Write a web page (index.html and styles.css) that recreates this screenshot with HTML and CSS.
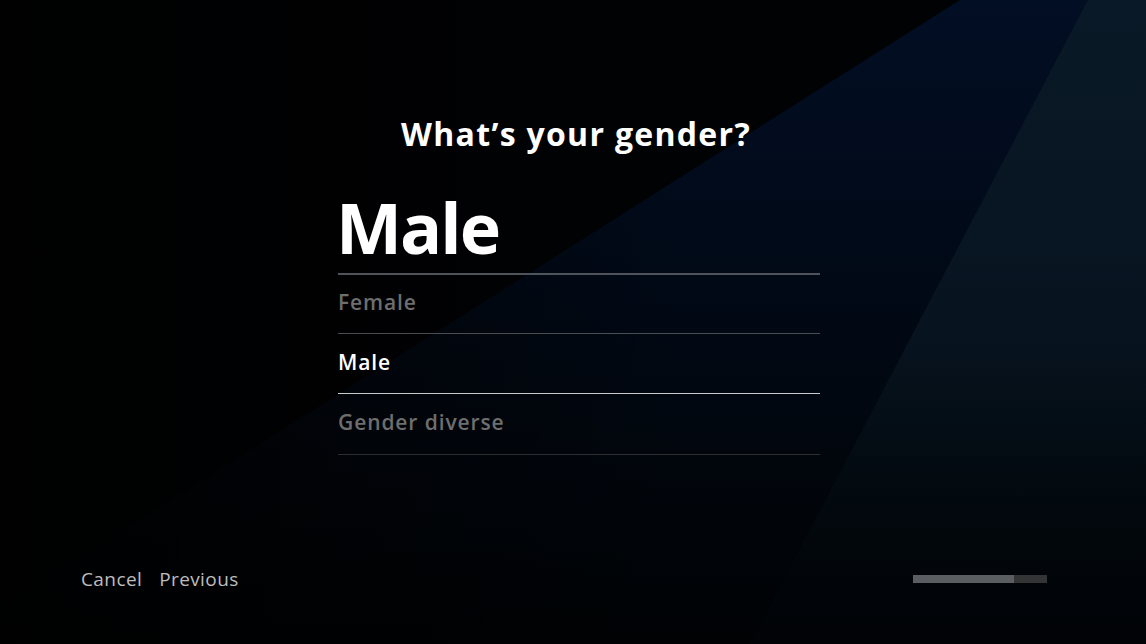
FILE: index.html
```html
<!DOCTYPE html>
<html lang="en">
<head>
<meta charset="utf-8">
<title>What's your gender?</title>
<link rel="stylesheet" href="styles.css">
</head>
<body>
<div class="screen">
  <svg class="backdrop" width="1146" height="644" viewBox="0 0 1146 644" aria-hidden="true">
    <defs>
      <linearGradient id="gBlue" x1="0" y1="0" x2="0" y2="1">
        <stop offset="0" stop-color="#020e24"/>
        <stop offset="0.45" stop-color="#010916"/>
        <stop offset="0.8" stop-color="#01050a"/>
        <stop offset="1" stop-color="#000204"/>
      </linearGradient>
      <linearGradient id="gTeal" x1="0" y1="0" x2="0" y2="1">
        <stop offset="0" stop-color="#0a1927"/>
        <stop offset="0.5" stop-color="#071420"/>
        <stop offset="0.8" stop-color="#02080d"/>
        <stop offset="1" stop-color="#010306"/>
      </linearGradient>
      <linearGradient id="gFade" x1="0" y1="0" x2="1" y2="0">
        <stop offset="0" stop-color="#000" stop-opacity="0.85"/>
        <stop offset="0.35" stop-color="#000" stop-opacity="0.35"/>
        <stop offset="0.6" stop-color="#000" stop-opacity="0"/>
      </linearGradient>
    </defs>
    <rect width="1146" height="644" fill="#010204"/>
    <polygon points="960,0 1146,0 1146,644 0,644 0,609" fill="url(#gBlue)"/>
    <rect width="1146" height="644" fill="url(#gFade)"/>
    <polygon points="1088,0 1146,0 1146,644 750,644" fill="url(#gTeal)"/>
  </svg>

  <main class="content">
    <h1 class="title">What’s your gender?</h1>
    <section class="picker">
      <div class="current">Male</div>
      <ul class="options">
        <li class="option">Female</li>
        <li class="option option--selected">Male</li>
        <li class="option option--last">Gender diverse</li>
      </ul>
    </section>
  </main>

  <footer class="footer">
    <nav class="nav">
      <span class="nav-link">Cancel</span>
      <span class="nav-link">Previous</span>
    </nav>
    <div class="progress"><div class="progress-fill" style="width: 75%"></div></div>
  </footer>
</div>
</body>
</html>
```

FILE: styles.css
```css
* { box-sizing: border-box; }

html, body {
  margin: 0;
  padding: 0;
  background: #000;
}

body {
  font-family: "Open Sans", "Noto Sans", sans-serif;
  color: #fff;
}

.screen {
  position: relative;
  width: 1146px;
  height: 644px;
  overflow: hidden;
  display: flex;
  flex-direction: column;
}

.backdrop {
  position: absolute;
  left: 0;
  top: 0;
  z-index: 0;
}

.content {
  position: relative;
  z-index: 1;
  display: flex;
  flex-direction: column;
  align-items: center;
  padding-top: 111px;
}

.title {
  margin: 0;
  font-size: 32px;
  line-height: 46px;
  font-weight: 700;
  letter-spacing: 1.3px;
  text-align: center;
  padding-left: 6px;
}

.picker {
  width: 482px;
  margin-left: 12px;
  margin-top: 24px;
}

.current {
  font-size: 70px;
  line-height: 92px;
  font-weight: 700;
  letter-spacing: -2px;
  text-indent: -2px;
  border-bottom: 2px solid #4f545b;
}

.options {
  list-style: none;
  margin: 0;
  padding: 0;
}

.option {
  height: 60px;
  padding-top: 13px;
  font-size: 21px;
  line-height: 30px;
  font-weight: 600;
  letter-spacing: 0.9px;
  color: #6e6e6e;
  border-bottom: 1px solid #4a4c50;
}

.option:first-child {
  height: 59px;
  padding-top: 12px;
}

.option--selected {
  color: #fff;
  border-bottom-color: #c9cacc;
}

.option--last {
  height: 61px;
  border-bottom-color: #2c2e32;
}

.footer {
  position: relative;
  z-index: 1;
  margin-top: auto;
  display: flex;
  align-items: center;
  justify-content: space-between;
  padding: 0 99px 52px 81px;
}

.nav {
  display: flex;
  gap: 17px;
}

.nav-link {
  font-size: 19px;
  line-height: 26px;
  letter-spacing: 0.4px;
  color: #bdbdbd;
}

.progress {
  width: 134px;
  height: 8px;
  background: #333436;
}

.progress-fill {
  height: 100%;
  background: #5b5e61;
}
```
